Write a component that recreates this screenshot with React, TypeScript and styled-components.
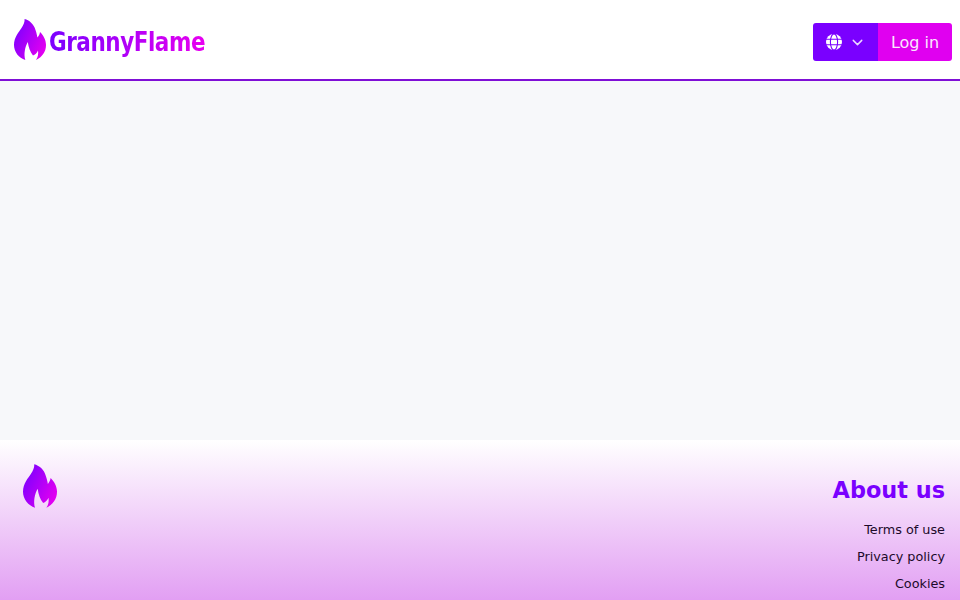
import React from "react";
import styled, { createGlobalStyle } from "styled-components";
import { ChevronDown } from "lucide-react";

const Global = createGlobalStyle`
  html, body { margin: 0; padding: 0; height: 100%; overflow: hidden; }
  body { font-family: "DejaVu Sans", sans-serif; background: #f7f8fa; }
  #root { height: 100%; }
`;

const Page = styled.div`
  display: flex;
  flex-direction: column;
  height: 600px;
`;

const Header = styled.header`
  display: flex;
  align-items: center;
  justify-content: space-between;
  box-sizing: border-box;
  height: 81px;
  padding: 0 8px 0 14px;
  background: #ffffff;
  border-bottom: 2px solid #7f0fd6;
`;

const Logo = styled.div`
  display: flex;
  align-items: center;
  gap: 3px;
`;

const Wordmark = styled.span`
  display: inline-block;
  margin-top: 4px;
  font-family: "DejaVu Sans Condensed", "DejaVu Sans", sans-serif;
  font-weight: 700;
  font-size: 26px;
  line-height: 40px;
  letter-spacing: -0.5px;
  background: linear-gradient(90deg, #7a00ff, #e800f0);
  -webkit-background-clip: text;
  background-clip: text;
  color: transparent;
  transform: scaleX(0.92);
  transform-origin: left center;
`;

const Actions = styled.div`
  display: flex;
  height: 38px;
  margin-top: 5px;
`;

const LangButton = styled.button`
  display: flex;
  align-items: center;
  gap: 7px;
  width: 65px;
  padding: 0 0 0 13px;
  border: 0;
  border-radius: 3px 0 0 3px;
  background: #7a00ff;
  color: #ecd9ff;
  box-sizing: border-box;
`;

const LoginButton = styled.button`
  width: 74px;
  padding: 0;
  border: 0;
  border-radius: 0 3px 3px 0;
  background: #e000f0;
  color: #fbe6ff;
  font-family: inherit;
  font-size: 16px;
`;

const Main = styled.main`
  flex: 1;
  background: #f7f8fa;
`;

const Footer = styled.footer`
  display: flex;
  justify-content: space-between;
  box-sizing: border-box;
  height: 160px;
  padding: 24px 15px 0 23px;
  background: linear-gradient(180deg, #ffffff 0%, #e29ff3 100%);
`;

const AboutColumn = styled.nav`
  display: flex;
  flex-direction: column;
  align-items: flex-end;
`;

const AboutTitle = styled.h2`
  margin: 12px 0 12px;
  font-size: 22.4px;
  line-height: 28px;
  font-weight: 700;
  color: #7a00ff;
`;

const FooterLink = styled.a`
  font-size: 12.8px;
  line-height: 27px;
  color: #1c0a2a;
`;

const flamePath =
  "M10.6 0C15 1 20 5 21.5 11C22.5 14 23 16 23.4 18.5C24.8 17 25.8 15 26 13C29.5 16.5 32 21 32 26C32 33 28 38 22 41C24 38 24.5 35 24 31.5C23 34 21 35.8 19 36.5C16 33 14.5 28 13.8 23C11 28 9.5 35 11.3 41C5 39 0 33 0 26C0 18 5 13 7.5 9C9.5 6 10.8 3 10.6 0Z";

const Flame = ({ id, width, height }: { id: string; width: number; height: number }) => (
  <svg width={width} height={height} viewBox="0 0 32 41" aria-hidden="true">
    <defs>
      <linearGradient id={id} x1="0" y1="0.2" x2="1" y2="0.8">
        <stop offset="0" stopColor="#7a00ff" />
        <stop offset="1" stopColor="#e800f0" />
      </linearGradient>
    </defs>
    <path d={flamePath} fill={`url(#${id})`} />
  </svg>
);

const Globe = () => (
  <svg width="16" height="16" viewBox="0 0 16 16" aria-hidden="true">
    <circle cx="8" cy="8" r="8" fill="#ffffff" />
    <g fill="none" stroke="#7a00ff" strokeWidth="1.1">
      <path d="M0 5.3H16M0 10.7H16" />
      <ellipse cx="8" cy="8" rx="3.6" ry="8" />
    </g>
  </svg>
);

export default function App() {
  return (
    <Page>
      <Global />
      <Header>
        <Logo>
          <Flame id="flame-top" width={32} height={41} />
          <Wordmark>GrannyFlame</Wordmark>
        </Logo>
        <Actions>
          <LangButton aria-label="Language">
            <Globe />
            <ChevronDown size={17} strokeWidth={2} />
          </LangButton>
          <LoginButton>Log in</LoginButton>
        </Actions>
      </Header>
      <Main />
      <Footer>
        <Flame id="flame-bottom" width={34} height={44} />
        <AboutColumn>
          <AboutTitle>About us</AboutTitle>
          <FooterLink>Terms of use</FooterLink>
          <FooterLink>Privacy policy</FooterLink>
          <FooterLink>Cookies</FooterLink>
        </AboutColumn>
      </Footer>
    </Page>
  );
}
